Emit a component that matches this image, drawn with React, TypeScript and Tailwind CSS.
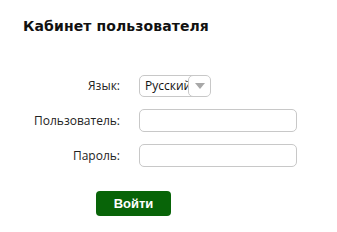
export default function App() {
  return (
    <div className="h-[232px] w-[337px] bg-white font-['Open_Sans',sans-serif] text-[12px] text-[#222]">
      <h1 className="pl-[23px] pt-[17px] font-['DejaVu_Sans',sans-serif] text-[14px] font-bold leading-[18px] tracking-[0.1px] text-[#111]">
        Кабинет пользователя
      </h1>

      <div className="mt-[40px] grid grid-cols-[120px_160px] items-center gap-x-[19px]">
        <label className="text-right">Язык:</label>
        <div className="relative flex h-[22px] w-[72px] items-center overflow-hidden rounded-[5px] border border-[#c8c8c8] bg-white">
          <span className="pl-[5px] text-[12px] text-[#111]">Русский</span>
          <span className="absolute right-[-1px] top-[-1px] flex h-[22px] w-[23px] items-center justify-center rounded-[5px] border border-[#c8c8c8] bg-white">
            <svg width="10" height="6" viewBox="0 0 10 6">
              <path d="M0 0h10L5 6z" fill="#a8a8a8" />
            </svg>
          </span>
        </div>

        <label className="mt-[12px] text-right">Пользователь:</label>
        <input className="mt-[12px] h-[23px] w-[158px] rounded-[5px] border border-[#c8c8c8] bg-white outline-none" />

        <label className="mt-[12px] text-right">Пароль:</label>
        <input
          type="password"
          className="mt-[12px] h-[23px] w-[158px] rounded-[5px] border border-[#c8c8c8] bg-white outline-none"
        />
      </div>

      <div className="mt-[24px] pl-[96px]">
        <button className="flex h-[25px] w-[75px] items-center justify-center rounded-[4px] bg-[#086408] font-['Liberation_Sans',sans-serif] text-[13px] font-bold text-white">
          Войти
        </button>
      </div>
    </div>
  );
}
